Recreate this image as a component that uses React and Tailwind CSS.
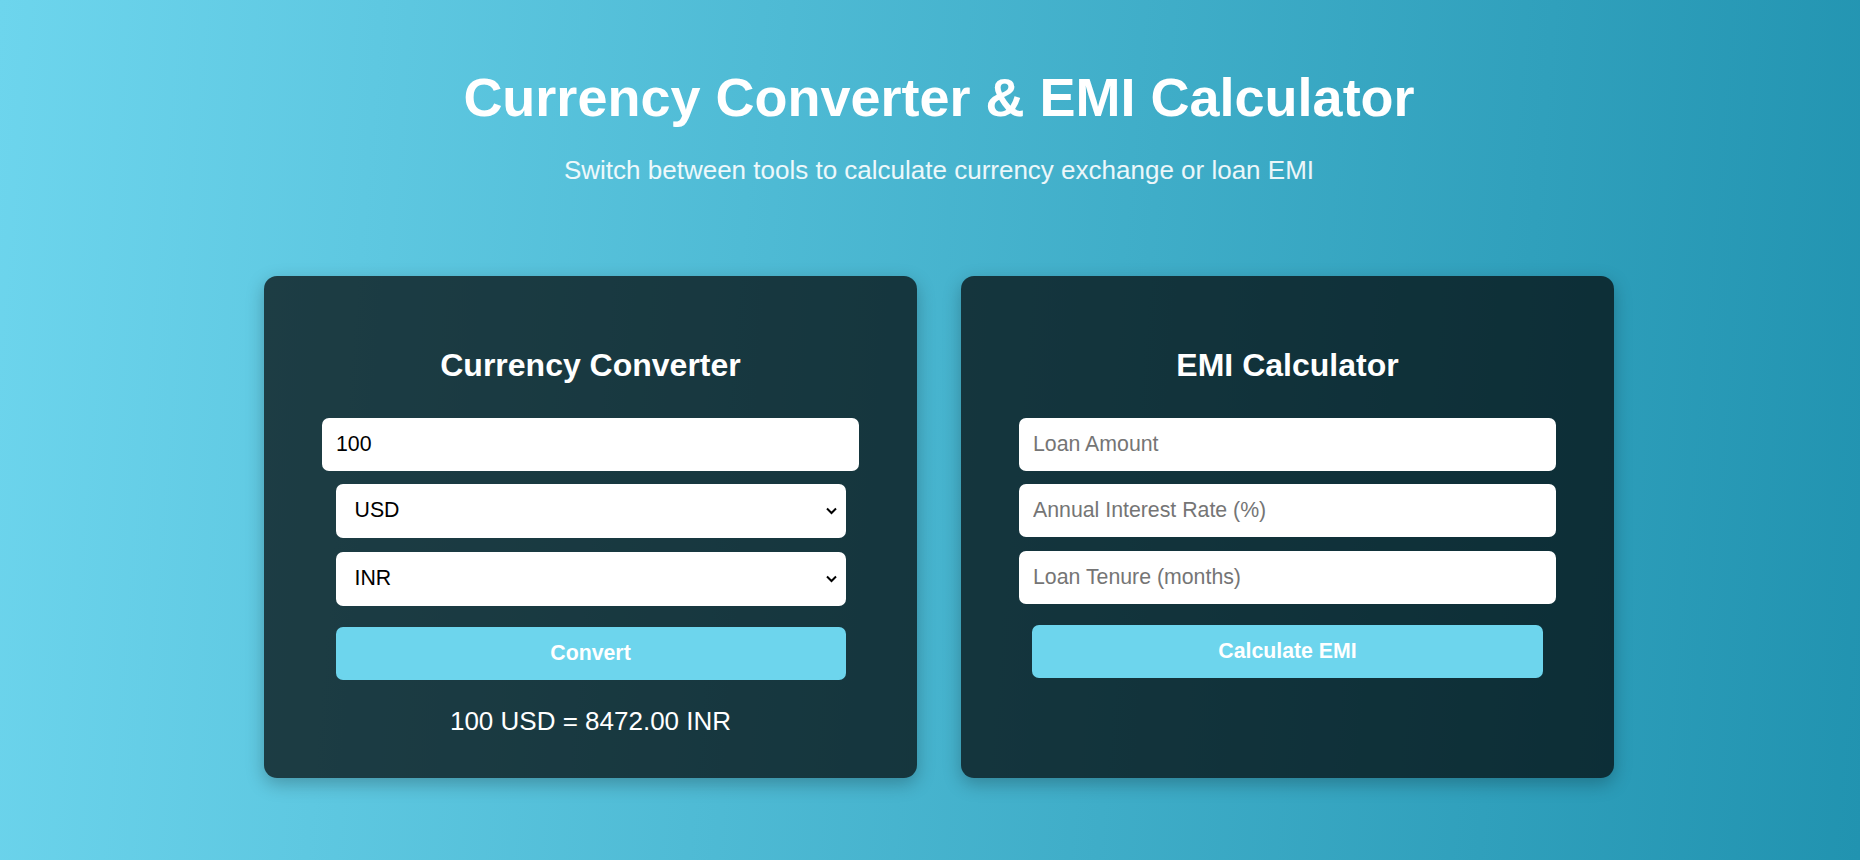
import React, { useState } from "react";

const font = { fontFamily: '"Liberation Sans", Arial, sans-serif' };

function Select({ value, onChange, options, className }) {
  return (
    <div className={"relative mx-auto w-[510px] " + className}>
      <select
        value={value}
        onChange={onChange}
        className="block h-[54px] w-full appearance-none rounded-[7px] bg-white pl-[19px] pr-[36px] text-[21.3px] text-black outline-none"
      >
        {options.map((o) => (
          <option key={o}>{o}</option>
        ))}
      </select>
      {/* chevron */}
      <svg
        className="pointer-events-none absolute right-[9px] top-1/2 h-[8px] w-[11px] -translate-y-1/2"
        viewBox="0 0 11 8"
        fill="none"
        stroke="black"
        strokeWidth="2"
      >
        <path d="M1 1.5 L5.5 6 L10 1.5" />
      </svg>
    </div>
  );
}

export default function App() {
  const [amount, setAmount] = useState("100");
  const [from, setFrom] = useState("USD");
  const [to, setTo] = useState("INR");

  return (
    <div
      className="min-h-[860px] w-full bg-[linear-gradient(95deg,#6dd5ed_0%,#2193b0_100%)] pl-[18px] pt-[66px] text-white"
      style={font}
    >
      {/* Header */}
      <div className="text-center">
        <h1 className="text-[54px] font-bold leading-[62px]">
          Currency Converter &amp; EMI Calculator
        </h1>
        <p className="mt-[27px] text-[26px] leading-[30px] text-white/90">
          Switch between tools to calculate currency exchange or loan EMI
        </p>
      </div>

      {/* Cards */}
      <div className="mt-[91px] flex justify-center gap-[44px]">

        {/* Currency Converter */}
        <div className="w-[653px] rounded-[13px] bg-black/70 px-[58px] pb-[42px] pt-[71px] shadow-[0_6px_18px_rgba(0,0,0,0.25)]">
          <h2 className="mb-[34px] text-center text-[32px] font-bold leading-[37px]">
            Currency Converter
          </h2>

          <input
            type="number"
            value={amount}
            onChange={(e) => setAmount(e.target.value)}
            className="block h-[53px] w-full rounded-[7px] bg-white px-[14px] text-[21.3px] text-black outline-none"
          />

          <Select
            value={from}
            onChange={(e) => setFrom(e.target.value)}
            options={["USD", "EUR", "INR"]}
            className="mt-[13px]"
          />

          <Select
            value={to}
            onChange={(e) => setTo(e.target.value)}
            options={["INR", "USD", "EUR"]}
            className="mt-[14px]"
          />

          <button className="mx-auto mt-[21px] block h-[53px] w-[510px] rounded-[7px] bg-[#6dd5ed] text-[21.3px] font-bold text-white">
            Convert
          </button>

          <p className="mt-[26px] text-center text-[26px] leading-[30px]">
            100 USD = 8472.00 INR
          </p>
        </div>

        {/* EMI Calculator */}
        <div className="w-[653px] rounded-[13px] bg-black/70 px-[58px] pb-[42px] pt-[71px] shadow-[0_6px_18px_rgba(0,0,0,0.25)]">
          <h2 className="mb-[34px] text-center text-[32px] font-bold leading-[37px]">
            EMI Calculator
          </h2>

          <input
            type="number"
            placeholder="Loan Amount"
            className="block h-[53px] w-full rounded-[7px] bg-white px-[14px] text-[21.3px] text-black outline-none placeholder:text-[#757575]"
          />
          <input
            type="number"
            placeholder="Annual Interest Rate (%)"
            className="mt-[13px] block h-[53px] w-full rounded-[7px] bg-white px-[14px] text-[21.3px] text-black outline-none placeholder:text-[#757575]"
          />
          <input
            type="number"
            placeholder="Loan Tenure (months)"
            className="mt-[14px] block h-[53px] w-full rounded-[7px] bg-white px-[14px] text-[21.3px] text-black outline-none placeholder:text-[#757575]"
          />

          <button className="mx-auto mt-[21px] block h-[53px] w-[511px] rounded-[7px] bg-[#6dd5ed] text-[21.3px] font-bold text-white">
            Calculate EMI
          </button>
        </div>

      </div>
    </div>
  );
}
